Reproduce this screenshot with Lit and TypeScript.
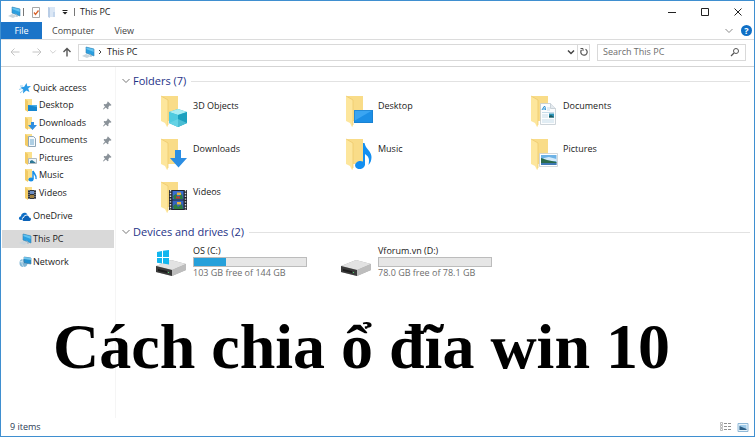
import { LitElement, html, svg, css } from "lit";
import { customElement, property, state } from "lit/decorators.js";

const smallFolder = svg`<path d="M1 1h7v12H5l-4-1z" fill="#fbe08c"/><path d="M1 1l3 2v11l-3-2z" fill="#f2cb66"/>`;
const bigFolder = svg`
  <path d="M2 1h16v25H7z" fill="#f9dc88"/>
  <path d="M1 1l7 4v26l-1 1-2-4-4-2z" fill="#fde69c"/>
  <path d="M1 1l7 4v25" fill="none" stroke="#ecc768" stroke-width=".7"/>`;
const monitor = svg`
  <path d="M5 2l8 2v7L5 8z" fill="#2b9fe0"/><path d="M5 2l8 2v3L5 4z" fill="#63c4f2"/>
  <path d="M5 2l8 2v7L5 8z" fill="none" stroke="#3584b5" stroke-width=".6"/>
  <path d="M1 11l4-2 5 2-4 2z" fill="#c9d5dd"/><path d="M8 9l2 1v2" stroke="#9bb2c2" fill="none"/>`;
const drive = svg`
  <path d="M1 21l15-6 15 4v6l-14 6-16-4z" fill="#a8a8a8"/>
  <path d="M1 21l15-6 15 4-14 6z" fill="#e2e2e2"/>
  <path d="M1 21l16 4v6L1 27z" fill="#3a3a3a"/>
  <path d="M3 24l9 2v2l-9-2z" fill="#1c1c1c"/><path d="M13 27h1v1h-1z" fill="#4fd06d"/>
  <path d="M17 25l14-6v6l-14 6z" fill="#bdbdbd"/>`;

const glyphs: Record<string, { box: string; art: unknown }> = {
  pc: { box: "0 0 14 14", art: monitor },
  star: {
    box: "0 0 14 14",
    art: svg`<path d="M8.500 2l.8 3.200L13 5l-2.800 2.500 1.300 3.500-3.300-1.500L5 12.500l.3-3.700L2.500 6.500l3.700-.7z" fill="#2a9be6"/><path d="M2 5h3M1 8.500l3-1M2 12l3-2.500" stroke="#7cc1ee" stroke-width=".8"/>`,
  },
  desktop: { box: "0 0 14 14", art: svg`${smallFolder}<path d="M4 7h9v6H4z" fill="#1687d0"/><path d="M4 7h9v2z" fill="#49aee8"/>` },
  downloads: { box: "0 0 14 14", art: svg`${smallFolder}<path d="M7 6h3v3h3l-4.500 5L4 9h3z" fill="#2f8fe0"/>` },
  documents: { box: "0 0 14 14", art: svg`${smallFolder}<path d="M4.500 3.500h5l2 2v8h-7z" fill="#f5f9fc" stroke="#8fa6b8"/><path d="M6 7h4M6 9h4M6 11h4" stroke="#69a5cc"/>` },
  pictures: { box: "0 0 14 14", art: svg`${smallFolder}<path d="M4.500 7.500h8v5h-8z" fill="#eef6fa" stroke="#b0b9bf"/><path d="M6 12v-2l2-1 4 3z" fill="#2d7795"/>` },
  music: { box: "0 0 14 14", art: svg`${smallFolder}<ellipse cx="7" cy="11.500" rx="2.600" ry="2" fill="#168ee6"/><path d="M9 11V3c1 3 4 4 3 8" fill="none" stroke="#168ee6" stroke-width="1.500"/>` },
  videos: { box: "0 0 14 14", art: svg`${smallFolder}<path d="M4 4h8v9H4z" fill="#30343c"/><path d="M6 5h4v3H6z" fill="#6e8fc4"/><path d="M6 9h4v3H6z" fill="#a0803f"/><path d="M5 4v9M11 4v9" stroke="#c9cdd2" stroke-width=".8" stroke-dasharray="1 1"/>` },
  cloud: {
    box: "0 0 14 14",
    art: svg`<path d="M4 11H3C0 11 .5 7.500 3 7.300 3 3.500 8 2.500 9.500 5.500 6.500 5.500 5.500 7 5.500 8 4 8.500 3.500 9.500 4 11z" fill="#0f6fc6"/><path d="M5.500 12c-1.500-.5-1.500-3 .5-3.200C6.500 6 10.500 5.800 11.200 8.500c2.300 0 2.300 3.300.3 3.500z" fill="#0b62b8"/>`,
  },
  network: {
    box: "0 0 14 14",
    art: svg`<circle cx="5.500" cy="8" r="4" fill="#7fb6d6"/><path d="M2 7c3-2 5 3 7 1M5 4c-2 3-1 6 1 8" stroke="#d3e9f4" fill="none"/><path d="M6 2l7 1v6L6 8z" fill="#2090cf" stroke="#43759a" stroke-width=".6"/><path d="M6 2l7 1v2L6 4z" fill="#72c7ee"/>`,
  },
  pin: { box: "0 0 9 9", art: svg`<path d="M5 .5L8.500 4l-1 .8-1-.2L5.300 6.200l.2 1.600-.9.500-1.800-1.800L.5 8.500 0 8l2-2.500L.6 3.900l.6-.8 1.600.2L4.400 2l-.2-.9z" fill="#8a9299"/>` },
  big3d: {
    box: "0 0 28 32",
    art: svg`${bigFolder}<path d="M9 17l9-3 9 3v11l-9 4-9-4z" fill="#2fb9d3"/><path d="M9 17l9-3 9 3-9 3z" fill="#a9edf3"/><path d="M9 17l9 3v12l-9-4z" fill="#4fcbe0"/><path d="M18 20l9-3v11l-9 4z" fill="#1ba0bf"/><path d="M9 28l9-4 9 4-9 4z" fill="#7bdcea" opacity=".5"/>`,
  },
  bigDesktop: { box: "0 0 28 32", art: svg`${bigFolder}<path d="M9 15h19v13H9z" fill="#1c8fe6"/><path d="M9 15h19L9 26z" fill="#3aa5f2"/><path d="M9.500 15.500h18v12h-18z" fill="none" stroke="#1779c4" stroke-width=".6"/>` },
  bigDocuments: {
    box: "0 0 28 32",
    art: svg`${bigFolder}<path d="M10.500 8.500h10l5 5v16h-15z" fill="#fcfdfe" stroke="#c2cad1" stroke-width=".8"/><path d="M20.500 8.500v5h5" fill="#e4eaef" stroke="#c2cad1" stroke-width=".8"/><path d="M12 15l2-3.500h1l.5 3.500M13 14h2" stroke="#2f94d6" fill="none"/><path d="M17 13h3M17 15h3M12 17.500h12M12 20h6M12 22h6M12 25h12M12 27h12" stroke="#b9d3e4" stroke-width=".8"/><path d="M19 18.500h5v4h-5z" fill="#2f94b8"/><path d="M19 21l2-1 3 2v.5h-5z" fill="#1d5b5f"/>`,
  },
  bigDownloads: { box: "0 0 28 32", art: svg`${bigFolder}<path d="M15 12h6v8h6l-8.500 9.500L10 20h5z" fill="#2c8ee3"/>` },
  bigMusic: { box: "0 0 28 32", art: svg`${bigFolder}<ellipse cx="15" cy="27" rx="5" ry="4" transform="rotate(-12 15 27)" fill="#138ff0"/><path d="M18 5h1.500c1 6 7 8 7 14 0 3-1 6-3 8 1-5 1-8-3.500-11v11h-2z" fill="#138ff0"/>` },
  bigPictures: {
    box: "0 0 28 32",
    art: svg`${bigFolder}<path d="M9.500 15.500h18v13h-18z" fill="#fff" stroke="#c6cdd2" stroke-width=".8"/><path d="M11 17h15.500v10H11z" fill="#6db2e6"/><path d="M14 20l5-1 7.500 2v2H11z" fill="#d3eafa"/><path d="M11 20l6 2 9.500 2v1H11z" fill="#2b6a4b"/><path d="M11 25h15.500v2H11z" fill="#3d78b4"/>`,
  },
  bigVideos: {
    box: "0 0 28 32",
    art: svg`${bigFolder}<path d="M9 9h18v20H9z" fill="#23262d"/><path d="M12.500 10h11v8.500h-11z" fill="#3b6fd0"/><path d="M12.500 19.500h11V28h-11z" fill="#3563c0"/><path d="M13 15l3-2 2 3 4-3 1 5h-9z" fill="#2f7d3f"/><path d="M17 11.500h4v2.500h-4z" fill="#e5b53d"/><path d="M16 15.500h4v2h-4z" fill="#c03a38"/><path d="M13 25l3-2 2 3 4-3 1 5h-9z" fill="#2f7d3f"/><path d="M17 21h4v2.500h-4z" fill="#e5b53d"/><path d="M10.500 9v20M25.500 9v20" stroke="#dfe2e6" stroke-width="1.400" stroke-dasharray="1.400 1.400"/>`,
  },
  osDrive: { box: "0 0 32 32", art: svg`${drive}<path d="M2 7l5-1v6H2zM8 5.800L14 5v7H8zM2 13h5v5.500l-5-.8zM8 13h6v6.500l-6-.9z" fill="#12b6ee"/>` },
  drive: { box: "0 0 32 32", art: drive },
  check: { box: "0 0 12 12", art: svg`<path d="M2.500 1.500h7v10h-7z" fill="#fff" stroke="#a8a8a8"/><path d="M4 6.500l1.500 2 3-4" fill="none" stroke="#d9622b" stroke-width="1.300"/>` },
  newFolder: { box: "0 0 12 12", art: svg`<path d="M2 1h7v10H2z" fill="#dbe7f5"/><path d="M2 1l2 1v10l-2-1z" fill="#b9cde6"/><path d="M7 6h2v5H7z" fill="#c4d6ec"/>` },
  customize: { box: "0 0 8 8", art: svg`<path d="M1.500 2.500h5" stroke="#222"/><path d="M1.500 4h5L4 6.500z" fill="#222"/>` },
  minimize: { box: "0 0 10 10", art: svg`<path d="M1 5.500h8" stroke="#222"/>` },
  maximize: { box: "0 0 10 10", art: svg`<path d="M1.500 1.500h7v7h-7z" fill="none" stroke="#222"/>` },
  close: { box: "0 0 10 10", art: svg`<path d="M1.500 1.500l7 7M8.500 1.500l-7 7" stroke="#222"/>` },
  chevron: { box: "0 0 10 10", art: svg`<path d="M1.500 3L5 6.500 8.500 3" fill="none" stroke="currentColor"/>` },
  dropdown: { box: "0 0 10 10", art: svg`<path d="M2 3.500L5 6.500l3-3" fill="none" stroke="currentColor" stroke-width="1.500"/>` },
  crumb: { box: "0 0 10 10", art: svg`<path d="M4 3l2 2-2 2" fill="none" stroke="#444"/>` },
  back: { box: "0 0 10 10", art: svg`<path d="M9.500 5H1M4.500 1.500L1 5l3.500 3.500" fill="none" stroke="currentColor"/>` },
  forward: { box: "0 0 10 10", art: svg`<path d="M.5 5H9M5.500 1.500L9 5 5.500 8.500" fill="none" stroke="currentColor"/>` },
  up: { box: "0 0 10 10", art: svg`<path d="M5 9.500V1.500M1.500 5L5 1.500 8.500 5" fill="none" stroke="currentColor" stroke-width="1.400"/>` },
  refresh: { box: "0 0 10 10", art: svg`<path d="M2.500 3A3.200 3.200 0 1 0 6.500 2.200" fill="none" stroke="#555" stroke-width="1.200"/><path d="M1.500 1.500h2.500V4" fill="none" stroke="#555"/>` },
  search: { box: "0 0 10 10", art: svg`<circle cx="6" cy="4" r="2.500" fill="none" stroke="#555"/><path d="M4 6L1 9" stroke="#555" stroke-width="1.200"/>` },
  details: { box: "0 0 13 12", art: svg`<path d="M1.500 1.500h2v2h-2zM1.500 4.500h2v2h-2zM1.500 7.500h2v2h-2z" fill="none" stroke="#ababab" stroke-width=".8"/><path d="M5 2.500h3M9 2.500h3M5 5.500h3M9 5.500h3M5 8.500h3M9 8.500h3" stroke="#909090"/>` },
  large: { box: "0 0 12 12", art: svg`<path d="M1.500 2.500h10v8h-10z" fill="#e9f4fb" stroke="#8fb9d8"/><path d="M3 4h7v5H3z" fill="#9ecbea"/><path d="M3 5l7 3v1H3z" fill="#2d5f86"/>` },
};

@customElement("shell-icon")
class ShellIcon extends LitElement {
  @property() name = "pc";
  static styles = css`
    :host { display: inline-flex; flex: none; width: 14px; height: 14px; }
    svg { width: 100%; height: 100%; display: block; }
  `;
  render() {
    const g = glyphs[this.name];
    return html`<svg viewBox=${g.box} aria-hidden="true">${g.art}</svg>`;
  }
}

const quickItems = [
  { label: "Desktop", icon: "desktop", pinned: true },
  { label: "Downloads", icon: "downloads", pinned: true },
  { label: "Documents", icon: "documents", pinned: true },
  { label: "Pictures", icon: "pictures", pinned: true },
  { label: "Music", icon: "music", pinned: false },
  { label: "Videos", icon: "videos", pinned: false },
];
const places = [
  { label: "OneDrive", icon: "cloud" },
  { label: "This PC", icon: "pc" },
  { label: "Network", icon: "network" },
];
const folders = [
  { label: "3D Objects", icon: "big3d" },
  { label: "Desktop", icon: "bigDesktop" },
  { label: "Documents", icon: "bigDocuments" },
  { label: "Downloads", icon: "bigDownloads" },
  { label: "Music", icon: "bigMusic" },
  { label: "Pictures", icon: "bigPictures" },
  { label: "Videos", icon: "bigVideos" },
];
const drives = [
  { label: "OS (C:)", icon: "osDrive", free: "103 GB free of 144 GB", used: 29 },
  { label: "Vforum.vn (D:)", icon: "drive", free: "78.0 GB free of 78.1 GB", used: 0 },
];

@customElement("app-root")
class AppRoot extends LitElement {
  @state() private place = "This PC";

  static styles = css`
    :host {
      display: flex; flex-direction: column; position: relative;
      box-sizing: border-box; min-height: 100vh;
      border: 1px solid #3f8fd0; background: #fff; color: #1a1a1a;
      font: 9px/12px "Open Sans", "Noto Sans", sans-serif;
    }
    * { box-sizing: border-box; }
    button { border: 0; padding: 0; margin: 0; background: none; font: inherit; color: inherit; display: flex; align-items: center; justify-content: center; }
    a { color: inherit; text-decoration: none; }
    ul { list-style: none; margin: 0; padding: 0; }

    .titlebar { display: flex; align-items: center; height: 21px; padding-left: 6px; }
    .titlebar .tool { width: 12px; height: 12px; }
    .tools { display: flex; align-items: center; }
    .rule { width: 1px; height: 8px; background: #777; }
    .after-pc { margin: 0 6px 0 2px; }
    .tools .gap { margin-left: 4px; }
    .tools .menu { margin: 0 5px 0 3px; }
    .menu shell-icon { width: 8px; height: 8px; }
    .title { margin: 0 auto 0 5px; font-size: 9px; font-weight: 400; }
    .window { display: flex; }
    .window button { width: 33px; height: 21px; }
    .small { width: 10px; height: 10px; }

    .ribbon { display: flex; height: 18px; border-bottom: 1px solid #dcdcdc; color: #444; }
    .ribbon button { height: 17px; }
    .ribbon .file { width: 41px; background: #1b74c8; color: #fff; }
    .ribbon .tab { padding: 0 10px; }
    .ribbon .end { display: flex; align-items: center; gap: 7px; margin-left: auto; padding-right: 2px; color: #8a8a8a; }
    .ribbon .help { width: 11px; height: 11px; border-radius: 50%; background: #0f6fc6; color: #fff; font-weight: 700; }

    .nav { display: flex; align-items: center; height: 27px; padding: 0 8px 2px 8px; border-bottom: 1px solid #d4d4d4; }
    .arrows { display: flex; align-items: center; width: 69px; color: #c4c4c4; }
    .arrows button { width: 12px; }
    .arrows .next { margin-left: 10px; }
    .arrows .recent { width: 8px; margin: 0 2px 0 6px; }
    .arrows .recent shell-icon { width: 8px; height: 8px; }
    .arrows .up { color: #555; margin-left: 2px; }
    .address { display: flex; flex: 1; align-items: center; height: 17px; border: 1px solid #d9d9d9; padding-left: 2px; }
    .address .crumb { margin-right: 2px; }
    .address .drop { margin-left: auto; width: 12px; color: #444; }
    .address .reload { width: 12px; height: 15px; border-left: 1px solid #d9d9d9; }
    .search { display: flex; align-items: center; width: 149px; height: 17px; margin-left: 7px; padding: 0 5px; border: 1px solid #d9d9d9; }
    .search input { flex: 1; min-width: 0; border: 0; padding: 0; outline: 0; font: inherit; background: none; }
    .search input::placeholder { color: #6d6d6d; opacity: 1; }

    .body { display: flex; flex: 1; }
    .side { width: 115px; padding: 12px 1px 0; border-right: 1px solid #f5f5f5; }
    .side a { display: flex; align-items: center; gap: 1px; }
    .side .root { height: 18px; padding-left: 16px; }
    .quick { display: grid; grid-auto-rows: 1fr; height: 106px; padding-top: 1px; }
    .quick a { padding: 0 2px 0 22px; }
    .quick .pin { width: 9px; height: 9px; margin-left: auto; }
    .places { display: grid; gap: 5px; padding-top: 4px; }
    .places .on { background: #d9d9d9; }

    .main { flex: 1; min-width: 0; padding-left: 5px; }
    .group { display: flex; align-items: center; gap: 2px; height: 18px; margin: 5px 0 4px; font-size: 11px; font-weight: 400; color: #1e3287; }
    .group shell-icon { color: #777; }
    .group::after { content: ""; flex: 1; height: 1px; margin: 0 4px 0 3px; background: #e2e2e2; }
    .folders { display: grid; grid-template-columns: repeat(auto-fill, 185px); grid-auto-rows: 43px; padding-left: 39px; }
    .folders a { display: flex; align-items: flex-start; gap: 5px; }
    .folders shell-icon { width: 28px; height: 32px; margin-top: 1px; }
    .folders span { padding-top: 6px; }
    .drives { display: grid; grid-template-columns: repeat(auto-fill, 185px); padding: 4px 0 0 34px; }
    .drives a { display: flex; gap: 6px; }
    .drives shell-icon { width: 32px; height: 32px; }
    .meta { display: grid; width: 114px; }
    .bar { height: 10px; border: 1px solid #bcbcbc; background: #e6e6e6; }
    .fill { height: 100%; background: #26a0da; }
    .free { color: #6d6d6d; }
    .drives-title { margin: 0; }

    .caption {
      position: absolute; left: 52px; top: 310px; margin: 0;
      font: 700 64px/72px "Liberation Serif", serif; color: #000; white-space: nowrap;
    }
    .status { display: flex; align-items: center; height: 18px; padding: 0 5px 0 9px; color: #2b3a55; }
    .views { display: flex; gap: 4px; margin-left: auto; }
    .views shell-icon { width: 13px; height: 12px; }
  `;

  private go(e: Event, label: string) {
    e.preventDefault();
    this.place = label;
  }

  render() {
    return html`
      <header class="titlebar">
        <div class="tools">
          <shell-icon name="pc"></shell-icon>
          <span class="rule after-pc"></span>
          <button aria-label="Properties"><shell-icon class="tool" name="check"></shell-icon></button>
          <button class="gap" aria-label="New folder"><shell-icon class="tool" name="newFolder"></shell-icon></button>
          <button class="menu" aria-label="Customize toolbar"><shell-icon name="customize"></shell-icon></button>
          <span class="rule"></span>
        </div>
        <h1 class="title">This PC</h1>
        <div class="window">
          <button aria-label="Minimize"><shell-icon class="small" name="minimize"></shell-icon></button>
          <button aria-label="Maximize"><shell-icon class="small" name="maximize"></shell-icon></button>
          <button aria-label="Close"><shell-icon class="small" name="close"></shell-icon></button>
        </div>
      </header>
      <nav class="ribbon" aria-label="Ribbon">
        <button class="file">File</button>
        <button class="tab">Computer</button>
        <button class="tab">View</button>
        <div class="end">
          <button aria-label="Expand ribbon"><shell-icon class="small" name="chevron"></shell-icon></button>
          <button class="help" aria-label="Help">?</button>
        </div>
      </nav>
      <div class="nav">
        <div class="arrows">
          <button aria-label="Back"><shell-icon class="small" name="back"></shell-icon></button>
          <button class="next" aria-label="Forward"><shell-icon class="small" name="forward"></shell-icon></button>
          <button class="recent" aria-label="Recent locations"><shell-icon name="chevron"></shell-icon></button>
          <button class="up" aria-label="Up"><shell-icon class="small" name="up"></shell-icon></button>
        </div>
        <div class="address">
          <shell-icon name="pc"></shell-icon>
          <shell-icon class="small crumb" name="crumb"></shell-icon>
          <span>This PC</span>
          <button class="drop" aria-label="Previous locations"><shell-icon class="small" name="dropdown"></shell-icon></button>
          <button class="reload" aria-label="Refresh"><shell-icon class="small" name="refresh"></shell-icon></button>
        </div>
        <label class="search">
          <input type="search" placeholder="Search This PC" aria-label="Search This PC" />
          <shell-icon class="small" name="search"></shell-icon>
        </label>
      </div>
      <div class="body">
        <nav class="side" aria-label="Places">
          <a class="root" href="#quick"><shell-icon name="star"></shell-icon>Quick access</a>
          <ul class="quick">
            ${quickItems.map(
              (q) => html`<li><a href="#${q.label}"><shell-icon name=${q.icon}></shell-icon>${q.label}
                ${q.pinned ? html`<shell-icon class="pin" name="pin"></shell-icon>` : null}</a></li>`
            )}
          </ul>
          <ul class="places">
            ${places.map(
              (p) => html`<li><a class="root ${p.label === this.place ? "on" : ""}" href="#${p.label}"
                @click=${(e: Event) => this.go(e, p.label)}><shell-icon name=${p.icon}></shell-icon>${p.label}</a></li>`
            )}
          </ul>
        </nav>
        <main class="main">
          <h2 class="group"><shell-icon class="small" name="chevron"></shell-icon>Folders (7)</h2>
          <div class="folders">
            ${folders.map((f) => html`<a href="#${f.label}"><shell-icon name=${f.icon}></shell-icon><span>${f.label}</span></a>`)}
          </div>
          <h2 class="group drives-title"><shell-icon class="small" name="chevron"></shell-icon>Devices and drives (2)</h2>
          <div class="drives">
            ${drives.map(
              (d) => html`<a href="#drive"><shell-icon name=${d.icon}></shell-icon>
                <span class="meta"><span>${d.label}</span>
                  <span class="bar" role="meter" aria-label="Used space" aria-valuenow=${d.used} aria-valuemin="0" aria-valuemax="100"
                    ><div class="fill" style="width:${d.used}%"></div></span>
                  <span class="free">${d.free}</span></span></a>`
            )}
          </div>
        </main>
      </div>
      <p class="caption">Cách chia ổ đĩa win 10</p>
      <footer class="status">
        <span>9 items</span>
        <div class="views">
          <button aria-label="Details view"><shell-icon name="details"></shell-icon></button>
          <button aria-label="Large icons view"><shell-icon name="large"></shell-icon></button>
        </div>
      </footer>
    `;
  }
}
